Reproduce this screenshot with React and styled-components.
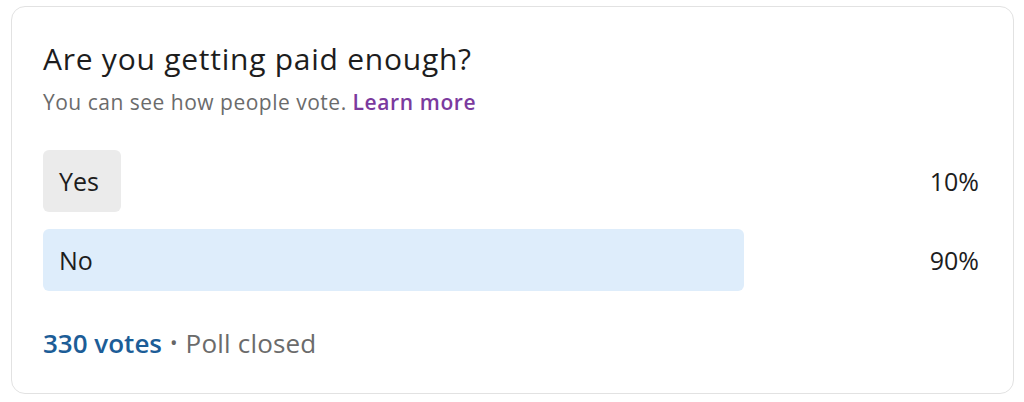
import React from "react";
import styled, { createGlobalStyle } from "styled-components";

const options = [
  { label: "Yes", percent: 10, winner: false },
  { label: "No", percent: 90, winner: true },
];

export default function App() {
  return (
    <>
      <GlobalStyle />
      <Card>
        <Question>Are you getting paid enough?</Question>
        <Note>
          You can see how people vote. <LearnMore href="#">Learn more</LearnMore>
        </Note>
        <Options>
          {options.map((o) => (
            <Row key={o.label}>
              <Track>
                <Bar $winner={o.winner} style={{ width: `${o.percent}%` }}>
                  <Label>{o.label}</Label>
                </Bar>
              </Track>
              <Percent>{o.percent}%</Percent>
            </Row>
          ))}
        </Options>
        <Footer>
          <Votes>330 votes</Votes>
          <Dot>•</Dot>
          <Status>Poll closed</Status>
        </Footer>
      </Card>
    </>
  );
}

const GlobalStyle = createGlobalStyle`
  body {
    margin: 0;
    background: #ffffff;
    font-family: "Open Sans", "Noto Sans", sans-serif;
  }
`;

const Card = styled.div`
  box-sizing: border-box;
  width: 1003px;
  height: 388px;
  margin: 6px 0 0 11px;
  padding: 34px 34px 0 31px;
  border: 1px solid #e2e2e2;
  border-radius: 14px;
  background: #ffffff;
`;

const Question = styled.h2`
  margin: 0;
  font-size: 30px;
  font-weight: 400;
  line-height: 36px;
  letter-spacing: 0.75px;
  color: #1d1d1d;
`;

const Note = styled.p`
  margin: 11px 0 0;
  font-size: 21px;
  line-height: 28px;
  letter-spacing: 0.5px;
  color: #6b6b6b;
`;

const LearnMore = styled.a`
  color: #7b3a9e;
  font-weight: 600;
  letter-spacing: 0.6px;
  text-decoration: none;
`;

const Options = styled.div`
  display: flex;
  flex-direction: column;
  gap: 17px;
  margin-top: 34px;
`;

const Row = styled.div`
  display: grid;
  grid-template-columns: 779px 1fr;
  align-items: center;
`;

const Track = styled.div`
  height: 62px;
`;

const Bar = styled.div`
  box-sizing: border-box;
  height: 100%;
  display: flex;
  align-items: center;
  padding-left: 16px;
  border-radius: 6px;
  background: ${(p) => (p.$winner ? "#deedfb" : "#ebebeb")};
  white-space: nowrap;
`;

const Label = styled.span`
  font-size: 25px;
  color: #1d1d1d;
`;

const Percent = styled.span`
  text-align: right;
  font-size: 25px;
  color: #1d1d1d;
`;

const Footer = styled.div`
  display: flex;
  align-items: center;
  gap: 8px;
  margin-top: 35px;
  font-size: 26px;
  line-height: 34px;
`;

const Votes = styled.span`
  color: #1c5d97;
  font-weight: 600;
`;

const Dot = styled.span`
  color: #666666;
  font-size: 20px;
`;

const Status = styled.span`
  color: #6b6b6b;
  letter-spacing: 0.2px;
`;
